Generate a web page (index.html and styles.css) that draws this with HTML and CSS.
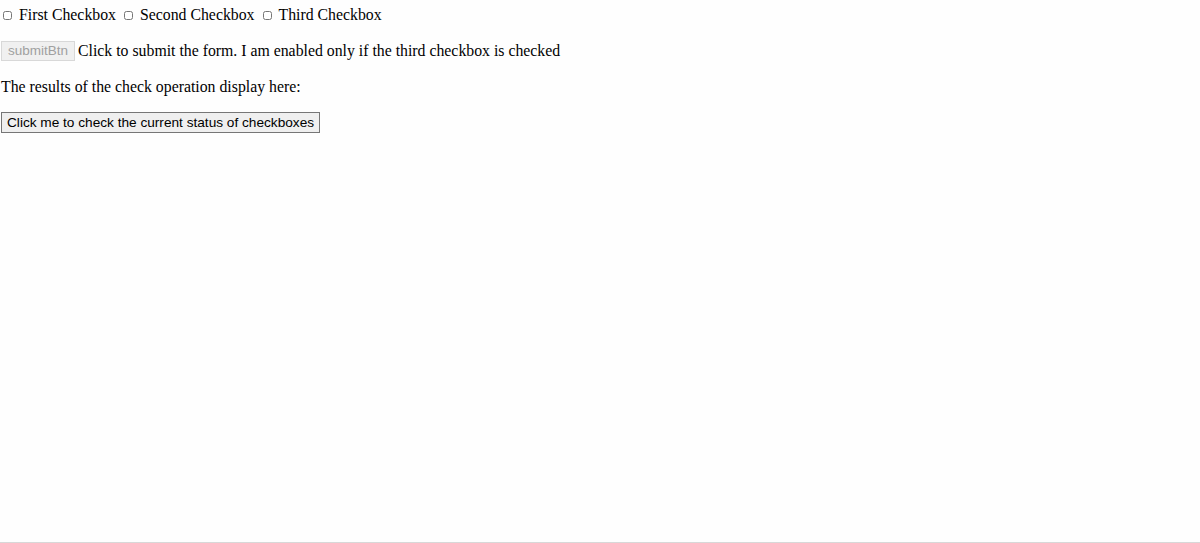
FILE: index.html
```html
<!DOCTYPE html>
<html>
<head>
<meta charset="utf-8">
<link rel="stylesheet" href="styles.css">
</head>
<body>
<div class="page">
  <div class="row row-checks">
    <label class="check"><input type="checkbox" class="box"> First Checkbox</label>
    <label class="check"><input type="checkbox" class="box"> Second Checkbox</label>
    <label class="check"><input type="checkbox" class="box"> Third Checkbox</label>
  </div>
  <div class="row row-submit">
    <button class="btn" disabled>submitBtn</button>
    <span class="txt">Click to submit the form. I am enabled only if the third checkbox is checked</span>
  </div>
  <div class="row row-result">The results of the check operation display here:</div>
  <div class="row row-btn">
    <button class="btn btn-check">Click me to check the current status of checkboxes</button>
  </div>
</div>
<div class="bottom-line"></div>
</body>
</html>
```
FILE: styles.css
```css
html, body {
  margin: 0;
  padding: 0;
  height: 100%;
  background: #fefefe;
}
body {
  font-family: "Liberation Serif", "Times New Roman", serif;
  font-size: 15.8px;
  line-height: 18px;
  color: #000;
  display: flex;
  flex-direction: column;
}
.page {
  flex: 1;
  padding: 0 1px;
}
.row-checks {
  padding: 6px 0 0 2px;
  display: flex;
  align-items: center;
  gap: 8px;
  height: 18px;
}
.check {
  display: inline-flex;
  align-items: center;
  gap: 7px;
}
.box {
  margin: 0;
  width: 9px;
  height: 9px;
}
.row-submit {
  margin-top: 17px;
  display: flex;
  align-items: center;
  gap: 3px;
  height: 20px;
}
.btn {
  font-family: "Liberation Sans", Arial, sans-serif;
  font-size: 13.5px;
  line-height: 16px;
  padding: 1px 6px;
  margin: 0;
  height: 20px;
  white-space: nowrap;
  background: #efefef;
  border: 1px solid #767676;
  border-radius: 0;
  color: #000;
}
.btn[disabled] {
  color: #a0a0a0;
  border-color: #d8d8d8;
  background: #f0f0f0;
}
.row-result {
  margin-top: 17px;
  height: 18px;
}
.row-btn {
  margin-top: 16px;
}
.btn-check {
  font-size: 13.65px;
  height: 21px;
  padding: 1px 5px;
}
.bottom-line {
  height: 1px;
  background: #d8d8d8;
}
```
